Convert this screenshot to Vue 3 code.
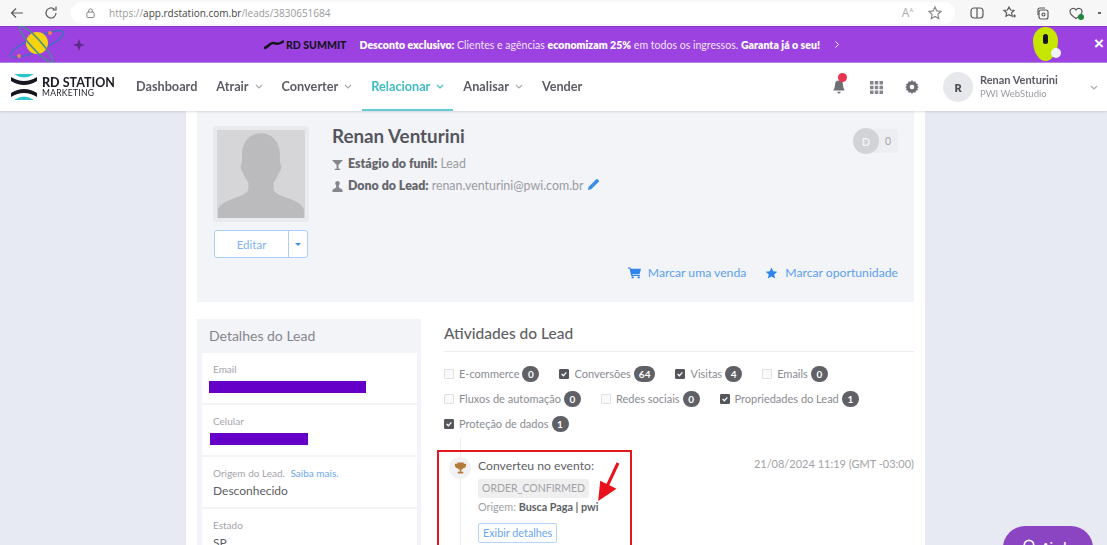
<script setup>
const navItems = [
  { label: 'Dashboard' },
  { label: 'Atrair', caret: true },
  { label: 'Converter', caret: true },
  { label: 'Relacionar', caret: true, active: true },
  { label: 'Analisar', caret: true },
  { label: 'Vender' }
]
const filterRows = [
  [
    { label: 'E-commerce', count: 0, on: false },
    { label: 'Conversões', count: 64, on: true },
    { label: 'Visitas', count: 4, on: true },
    { label: 'Emails', count: 0, on: false }
  ],
  [
    { label: 'Fluxos de automação', count: 0, on: false },
    { label: 'Redes sociais', count: 0, on: false },
    { label: 'Propriedades do Lead', count: 1, on: true }
  ],
  [{ label: 'Proteção de dados', count: 1, on: true }]
]
</script>

<template>
  <div class="screen">
    <header class="browser">
      <svg class="bicon back" viewBox="0 0 16 16"><path d="M14 8H3M7 3.500 2.500 8 7 12.500" /></svg>
      <svg class="bicon reload" viewBox="0 0 16 16"><path d="M13 8a5 5 0 1 1-1.600-3.700M13 1.500v3.500H9.500" /></svg>
      <div class="url">
        <svg class="lock" viewBox="0 0 12 12"><rect x="2" y="5" width="8" height="6" rx="1.500" /><path d="M4 5V3.500a2 2 0 0 1 4 0V5" /></svg>
        <span class="url-text">https://<b>app.rdstation.com.br</b>/leads/3830651684</span>
        <span class="aa">A<small>ᴬ</small></span>
        <svg class="bicon star" viewBox="0 0 16 16"><path d="m8 2 1.800 3.900 4.200.5-3.100 2.900.8 4.200L8 11.400l-3.700 2.100.8-4.200L2 6.400l4.200-.5z" /></svg>
      </div>
      <div class="tools">
        <svg class="bicon" viewBox="0 0 16 16"><rect x="2" y="3" width="12" height="10" rx="3" /><path d="M8 3v10" /></svg>
        <svg class="bicon" viewBox="0 0 16 16"><path d="m7 2 1.600 3 3.400.5-2.400 2.300.6 3.400L7 9.600l-3 1.600.6-3.400L2 5.500 5.400 5z" /><path d="M11 11h3M12.500 9.500v3" /></svg>
        <svg class="bicon" viewBox="0 0 16 16"><rect x="4" y="5" width="9" height="9" rx="2" /><path d="M3 10V4.500A2 2 0 0 1 5 3h5" /><circle cx="8.500" cy="9.500" r="1.500" /></svg>
        <span class="ext">
          <svg class="bicon" viewBox="0 0 16 16"><path d="M8 13.500C4 11 2 9 2 6.500 2 3 6.500 2.500 8 5c1.500-2.500 6-2 6 1.500 0 2.500-2 4.500-6 7z" /></svg>
          <i class="ext-dot"></i>
        </span>
        <span class="more"></span>
      </div>
    </header>

    <div class="banner">
      <svg class="planet" viewBox="0 0 60 36">
        <ellipse cx="31" cy="18" rx="29" ry="7" transform="rotate(-24 31 18)" fill="none" stroke="#3f6fc0" stroke-width="1.500" />
        <circle cx="31" cy="17" r="11" fill="#f5d40f" />
        <ellipse cx="30" cy="18" rx="24" ry="5" transform="rotate(48 30 18)" fill="none" stroke="#4a8a90" stroke-width="1.500" />
        <circle cx="13" cy="30" r="2" fill="#ee7f55" />
        <circle cx="44" cy="7" r="2" fill="#ee7f55" />
      </svg>
      <svg class="spark" viewBox="0 0 12 12"><path d="M6 0 7.500 4.500 12 6 7.500 7.500 6 12 4.500 7.500 0 6 4.500 4.500z" /></svg>
      <div class="promo">
        <svg class="wave" viewBox="0 0 20 10"><path d="M0 8c4 0 5-5 9-5s4 3 11-2" fill="none" stroke="#15151f" stroke-width="2.500" /></svg>
        <strong class="summit">RD SUMMIT</strong>
        <span class="promo-text"><b>Desconto exclusivo:</b> Clientes e agências <b>economizam 25%</b> em todos os ingressos. <b>Garanta já o seu!</b></span>
        <svg class="promo-arrow" viewBox="0 0 8 10"><path d="m2 1 4 4-4 4" /></svg>
      </div>
      <div class="mascot">
        <i class="keyhole"></i>
        <i class="bubble"></i>
      </div>
      <span class="banner-close">×</span>
    </div>

    <nav class="nav">
      <div class="logo">
        <svg viewBox="0 0 26 26" class="logo-mark">
          <path d="M0 3q13 8 26 0v4Q13 15 0 7z" fill="#15151f" />
          <path d="M0 23q13-8 26 0v-4Q13 11 0 19z" fill="#15151f" />
          <path d="M3 0h20q-10 7-20 0zM3 26h20q-10-7-20 0z" fill="#2cc4cc" />
        </svg>
        <div class="logo-text">
          <span class="logo-top"><b>RD</b> STATION</span>
          <span class="logo-sub">MARKETING</span>
        </div>
      </div>
      <ul class="menu">
        <li v-for="item in navItems" :key="item.label" :class="{ active: item.active }">
          {{ item.label }}
          <svg v-if="item.caret" class="caret" viewBox="0 0 8 5"><path d="m1 1 3 3 3-3" /></svg>
        </li>
      </ul>
      <div class="nav-right">
        <span class="bell">
          <svg viewBox="0 0 16 18"><path d="M8 2a4.500 4.500 0 0 0-4.500 4.500c0 4-1.500 6-2 7h13c-.500-1-2-3-2-7A4.500 4.500 0 0 0 8 2zM6 15a2 2 0 0 0 4 0z" /></svg>
          <i class="bell-dot"></i>
        </span>
        <svg class="grid-icon" viewBox="0 0 13 13"><path d="M0 0h3.500v3.500H0zM4.750 0h3.500v3.500h-3.500zM9.500 0H13v3.500H9.500zM0 4.750h3.500v3.500H0zM4.750 4.750h3.500v3.500h-3.500zM9.500 4.750H13v3.500H9.500zM0 9.500h3.500V13H0zM4.750 9.500h3.500V13h-3.500zM9.500 9.500H13V13H9.500z" /></svg>
        <svg class="gear" viewBox="0 0 14 14"><path fill-rule="evenodd" d="M7 0l1.300 1.700 2.100-.5.500 2.100 2.100.6L12.300 6 14 7l-1.700 1 .7 2.100-2.100.6-.5 2.100-2.100-.5L7 14l-1.300-1.700-2.100.5-.5-2.100L1 10.100 1.700 8 0 7l1.700-1L1 3.900l2.100-.6.500-2.100 2.100.5zM7 4.700a2.300 2.300 0 1 0 0 4.600 2.300 2.300 0 0 0 0-4.600z" /></svg>
        <span class="avatar">R</span>
        <div class="user">
          <span class="user-name">Renan Venturini</span>
          <span class="user-org">PWI WebStudio</span>
        </div>
        <svg class="caret user-caret" viewBox="0 0 8 5"><path d="m1 1 3 3 3-3" /></svg>
      </div>
    </nav>

    <main class="page">
      <div class="sheet">
        <section class="profile">
          <div class="photo-col">
            <div class="photo">
              <svg viewBox="0 0 84 84" preserveAspectRatio="none">
                <rect width="84" height="84" fill="#d6d6d8" />
                <path d="M42 3c-11 0-18 9-18 20 0 4 0 9-1 10-1 2 0 6 2 8 1 3 3 7 5 9v6c0 3-4 5-8 7C14 66 3 69 1 76v8h82v-8c-2-7-13-10-21-13-4-2-8-4-8-7v-6c2-2 4-6 5-9 2-2 3-6 2-8-1-1-1-6-1-10C60 12 53 3 42 3z" fill="#bbbbbd" />
              </svg>
            </div>
            <div class="edit-btn">
              <span class="edit-main">Editar</span>
              <span class="edit-drop"><i></i></span>
            </div>
          </div>
          <div class="identity">
            <h1>Renan Venturini</h1>
            <p class="meta">
              <svg viewBox="0 0 12 12" class="meta-icon"><path d="M0 1h12L7 6.500V10.500h2V12H3v-1.500h2V6.500z" /></svg>
              <b>Estágio do funil:</b> Lead
            </p>
            <p class="meta">
              <svg viewBox="0 0 12 12" class="meta-icon"><path d="M6 0a2.500 2.500 0 0 1 1.500 4.500V7l4 2.500V12H.500V9.500l4-2.500V4.500A2.500 2.500 0 0 1 6 0z" /></svg>
              <b>Dono do Lead:</b> renan.venturini@pwi.com.br
              <svg viewBox="0 0 14 14" class="pencil"><path d="M1 13l.8-3.500L10 1.300a1 1 0 0 1 1.400 0l1.300 1.300a1 1 0 0 1 0 1.400L4.500 12.200z" /></svg>
            </p>
          </div>
          <div class="profile-side">
            <div class="score"><span class="score-dot">D</span><span class="score-num">0</span></div>
            <div class="profile-links">
              <span class="plink">
                <svg viewBox="0 0 14 12"><path d="M0 0h2.500l.5 1.500h11l-1.500 5.500H4.500l.3 1h8v1.200H3.500L1.600 1.200H0z" /><circle cx="5" cy="10.800" r="1.200" /><circle cx="11.500" cy="10.800" r="1.200" /></svg>
                Marcar uma venda
              </span>
              <span class="plink">
                <svg viewBox="0 0 14 14"><path d="m7 .5 2 4.500 4.800.5-3.600 3.200 1 4.800L7 11l-4.200 2.500 1-4.800L.2 5.500 5 5z" /></svg>
                Marcar oportunidade
              </span>
            </div>
          </div>
        </section>

        <div class="columns">
          <aside class="details">
            <h2>Detalhes do Lead</h2>
            <div class="field">
              <span class="field-label">Email</span>
              <span class="redact redact-email"></span>
            </div>
            <div class="field">
              <span class="field-label">Celular</span>
              <span class="redact redact-phone"></span>
            </div>
            <div class="field">
              <span class="field-label">Origem do Lead. <a>Saiba mais.</a></span>
              <span class="field-value">Desconhecido</span>
            </div>
            <div class="field">
              <span class="field-label">Estado</span>
              <span class="field-value">SP</span>
            </div>
          </aside>

          <section class="activity">
            <h2>Atividades do Lead</h2>
            <div class="filters">
              <div v-for="(row, i) in filterRows" :key="i" class="filter-row">
                <label v-for="f in row" :key="f.label" class="filter">
                  <span class="box" :class="{ on: f.on }">
                    <svg v-if="f.on" viewBox="0 0 10 10"><path d="m2 5 2.200 2.200L8 3" /></svg>
                  </span>
                  <span class="filter-label">{{ f.label }}</span>
                  <span class="count">{{ f.count }}</span>
                </label>
              </div>
            </div>
            <div class="timeline">
              <div class="event">
                <div class="event-body">
                  <span class="trophy">
                    <svg viewBox="0 0 14 14"><path d="M3.500 1h7v1.500H13V4c0 2-1.500 3-3 3.300A3.500 3.500 0 0 1 7.800 9v2H10v2H4v-2h2.200V9A3.500 3.500 0 0 1 4 7.300C2.500 7 1 6 1 4V2.500h2.500z" /></svg>
                  </span>
                  <div class="event-text">
                    <p class="event-title">Converteu no evento:</p>
                    <span class="tag">ORDER_CONFIRMED</span>
                    <p class="origin">Origem: <b>Busca Paga | pwi</b></p>
                    <span class="details-btn">Exibir detalhes</span>
                  </div>
                </div>
                <svg class="arrow" viewBox="0 0 24 40"><path d="M21 2 9.500 26.500M3 37l1.500-15 12 6z" stroke="#e8111c" stroke-width="3" fill="#e8111c" /></svg>
              </div>
              <span class="event-date">21/08/2024 11:19 (GMT -03:00)</span>
            </div>
          </section>
        </div>
      </div>
      <div class="help">
        <svg viewBox="0 0 14 14"><circle cx="7" cy="7" r="5.500" /></svg>
        Ajuda
      </div>
    </main>
  </div>
</template>

<style>
html, body { margin: 0; background: #fff; overflow: hidden; }
</style>

<style scoped>
* { box-sizing: border-box; }
.screen {
  width: 1107px;
  height: 545px;
  overflow: hidden;
  font-family: Lato, "Noto Sans", sans-serif;
  color: #55565c;
  filter: blur(0.6px);
  display: flex;
  flex-direction: column;
}
h1, h2, p, ul { margin: 0; padding: 0; }

.browser {
  height: 26px;
  flex: none;
  background: #f7f7f7;
  display: flex;
  align-items: center;
  padding-left: 9px;
}
.bicon { width: 16px; height: 16px; fill: none; stroke: #5b5b5b; stroke-width: 1.200; flex: none; }
.back { margin-right: 18px; }
.reload { margin-right: 12px; }
.url {
  width: 884px;
  height: 22px;
  margin-top: -1px;
  background: #fff;
  border-radius: 11px;
  display: flex;
  align-items: center;
  padding: 0 7px 0 14px;
  font-family: "Open Sans", sans-serif;
  font-size: 10px;
  color: #9a9a9a;
}
.lock { width: 11px; height: 12px; fill: none; stroke: #777; margin-right: 13px; }
.url-text { flex: 1; }
.url-text b { font-weight: 400; color: #444; }
.aa { color: #aaa; font-size: 12px; margin-right: 14px; }
.aa small { font-size: 8px; vertical-align: 3px; }
.star { margin-right: 5px; stroke: #888; }
.tools { display: flex; gap: 17px; margin-left: 14px; align-items: center; }
.ext { position: relative; display: flex; }
.ext-dot { position: absolute; right: 0; bottom: 1px; width: 6px; height: 6px; background: #1f8a3a; border-radius: 50%; }
.more { width: 3px; height: 2px; background: #666; margin-left: -3px; }

.banner {
  height: 37px;
  flex: none;
  background: #9c42e0;
  border-top: 1px solid #8a34cc;
  border-bottom: 1px solid #b884e6;
  display: flex;
  align-items: center;
  position: relative;
  padding-left: 8px;
}
.planet { width: 60px; height: 36px; position: absolute; left: 6px; top: -1px; }
.spark { width: 12px; height: 12px; fill: #5c2a88; position: absolute; left: 73px; top: 12px; }
.promo {
  margin-left: 256px;
  display: flex;
  align-items: center;
  color: #f0e4fb;
  font-size: 10.550px;
}
.wave { width: 20px; height: 10px; margin-right: 2px; }
.summit { color: #15151f; font-size: 10.500px; font-weight: 900; margin-right: 13px; white-space: nowrap; }
.promo-text { white-space: nowrap; }
.promo-text b { color: #fff; font-weight: 800; }
.promo-arrow { width: 6px; height: 9px; fill: none; stroke: #fff; stroke-width: 1.300; margin-left: 14px; }
.mascot {
  position: absolute;
  left: 1033px;
  top: 0;
  width: 25px;
  height: 34px;
  background: #c6e600;
  border-radius: 50% 50% 50% 50% / 40% 40% 60% 60%;
}
.keyhole { position: absolute; left: 10px; top: 7px; width: 5px; height: 10px; background: #15151f; border-radius: 3px; }
.bubble { position: absolute; left: 18px; top: 21px; width: 10px; height: 10px; background: #eef2fb; border-radius: 50%; }
.banner-close {
  position: absolute;
  right: 3px;
  top: 7px;
  color: #fff;
  font: 700 17px/20px "Liberation Sans", sans-serif;
}

.nav {
  height: 48px;
  flex: none;
  background: #fff;
  display: flex;
  align-items: center;
  padding-left: 11px;
  box-shadow: 0 1px 2px rgba(60, 60, 80, 0.16);
  position: relative;
  z-index: 1;
}
.logo { display: flex; align-items: center; width: 116px; }
.logo-mark { width: 26px; height: 26px; margin-right: 5px; flex: none; }
.logo-text { display: flex; flex-direction: column; color: #1c1c24; }
.logo-top { font-size: 12.500px; line-height: 12px; font-weight: 700; white-space: nowrap; }
.logo-top b { font-weight: 900; }
.logo-sub { font-size: 8.500px; line-height: 9px; letter-spacing: 0.3px; }
.menu { list-style: none; display: flex; height: 100%; gap: 1px; }
.menu li {
  padding: 0 9px;
  display: flex;
  align-items: center;
  gap: 6px;
  font-size: 12.700px;
  font-weight: 700;
  color: #5b5c63;
  border-bottom: 2px solid transparent;
  white-space: nowrap;
}
.menu li.active { color: #3fbcc4; border-bottom-color: #63cdd3; }
.caret { width: 8px; height: 5px; fill: none; stroke: #a6a8ae; stroke-width: 1.100; }
.active .caret { stroke: #3fbcc4; }
.nav-right { margin-left: auto; display: flex; align-items: center; }
.bell { position: relative; width: 15px; height: 18px; margin-right: 23px; }
.bell svg { width: 14px; height: 17px; fill: #6d6f75; display: block; }
.bell-dot { position: absolute; left: 6px; top: -5px; width: 9px; height: 9px; background: #e8344e; border-radius: 50%; }
.grid-icon { width: 13px; height: 13px; fill: #85878d; margin-right: 22px; }
.gear { width: 14px; height: 14px; fill: #6d6f75; margin-right: 24px; }
.avatar {
  width: 30px;
  height: 30px;
  border-radius: 50%;
  background: #e7e8ec;
  color: #4d4e55;
  font-size: 11px;
  font-weight: 800;
  display: flex;
  align-items: center;
  justify-content: center;
  margin-right: 7px;
}
.user { display: flex; flex-direction: column; width: 110px; }
.user-name { font-size: 11px; line-height: 14px; font-weight: 700; color: #5b5c63; white-space: nowrap; }
.user-org { font-size: 9.500px; line-height: 14px; color: #9a9ba1; white-space: nowrap; }
.user-caret { margin-right: 9px; }

.page {
  flex: 1;
  min-height: 0;
  background: #e7eaf2;
  position: relative;
  overflow: hidden;
}
.sheet {
  width: 739px;
  height: 100%;
  margin-left: 186px;
  background: #fff;
  padding: 0 11px;
}
.profile {
  height: 191px;
  background: #f3f4f8;
  display: flex;
  padding: 15px 16px 0;
}
.photo-col { width: 96px; flex: none; }
.photo {
  width: 96px;
  height: 96px;
  background: #e9eaee;
  padding: 4px;
  border-radius: 2px;
}
.photo svg { width: 88px; height: 88px; display: block; }
.edit-btn {
  margin-top: 8px;
  margin-left: 1px;
  width: 94px;
  height: 28px;
  background: #fff;
  border: 1px solid #a9cffa;
  border-radius: 3px;
  display: flex;
  color: #7eb2ef;
  font-size: 11.500px;
}
.edit-main { flex: 1; display: flex; align-items: center; justify-content: center; }
.edit-drop {
  width: 19px;
  border-left: 1px solid #a9cffa;
  display: flex;
  align-items: center;
  justify-content: center;
}
.edit-drop i { border: 3px solid transparent; border-top: 3px solid #4a90e2; border-bottom: 0; }
.identity { margin-left: 23px; width: 290px; flex: none; margin-top: -1px; }
.identity h1 {
  font-size: 18.800px;
  line-height: 22px;
  font-weight: 700;
  color: #55565c;
  margin-bottom: 6px;
}
.meta {
  display: flex;
  align-items: center;
  gap: 3px;
  font-size: 12.400px;
  line-height: 22px;
  color: #9a9ba1;
  white-space: nowrap;
}
.meta b { color: #66676d; font-weight: 800; }
.meta-icon { width: 11px; height: 11px; fill: #85868b; margin-right: 2px; }
.pencil { width: 13px; height: 13px; fill: #3d8de8; margin-top: -3px; }
.profile-side {
  flex: 1;
  display: flex;
  flex-direction: column;
  align-items: flex-end;
}
.score {
  display: flex;
  align-items: center;
  width: 45px;
  height: 24px;
  margin-top: 3px;
  background: #eceef2;
  border-radius: 12px 3px 3px 12px;
}
.score-dot {
  width: 26px;
  height: 26px;
  border-radius: 50%;
  background: #d2d3d6;
  color: #f2f2f4;
  font-size: 11px;
  font-weight: 700;
  display: flex;
  align-items: center;
  justify-content: center;
}
.score-num { margin-left: 6px; color: #a5a6ab; font-size: 10.500px; }
.profile-links {
  display: flex;
  gap: 19px;
  margin-top: 112px;
  white-space: nowrap;
}
.plink {
  display: flex;
  align-items: center;
  gap: 7px;
  color: #5ba0ee;
  font-size: 12.200px;
}
.plink svg { width: 13px; height: 12px; fill: #2f86ea; }

.columns { display: flex; margin-top: 17px; }
.details {
  width: 224px;
  flex: none;
  background: #f3f4f8;
  padding: 0 4px 0 5px;
}
.details h2 {
  height: 34px;
  padding: 7px 7px 0;
  font-size: 14px;
  line-height: 20px;
  font-weight: 400;
  color: #85868c;
}
.field {
  height: 50px;
  background: #fff;
  margin-bottom: 2px;
  padding: 10px 11px 0;
  display: flex;
  flex-direction: column;
  position: relative;
}
.field-label { font-size: 10px; line-height: 13px; color: #a3a4a9; }
.field-label a { color: #6ba7ee; margin-left: 3px; }
.field-value { font-size: 12px; line-height: 20px; margin-top: 1px; color: #5c5d63; }
.redact { display: block; background: #6500c8; position: absolute; left: 7px; }
.redact-email { top: 28px; width: 157px; height: 12px; }
.redact-phone { top: 28px; left: 8px; width: 98px; height: 12px; }

.activity { flex: 1; margin-left: 23px; min-width: 0; }
.activity h2 {
  height: 33px;
  padding-top: 4px;
  border-bottom: 1px solid #ececef;
  font-size: 15.500px;
  line-height: 20px;
  font-weight: 500;
  color: #5e5f65;
}
.filters { margin-top: 9px; }
.filter-row { display: flex; height: 25px; align-items: center; gap: 20px; }
.filter { display: flex; align-items: center; font-size: 11px; color: #8a8b91; white-space: nowrap; }
.box {
  width: 10px;
  height: 10px;
  border: 1px solid #dfe0e3;
  border-radius: 1px;
  background: #fafafa;
  margin-right: 5px;
  display: flex;
}
.box.on { background: #55565c; border-color: #55565c; }
.box svg { width: 100%; height: 100%; fill: none; stroke: #fff; stroke-width: 1.500; }
.count {
  min-width: 17px;
  height: 16px;
  border-radius: 8px;
  padding: 0 5px;
  margin-left: 3px;
  background: #606166;
  color: #fff;
  font-size: 10px;
  font-weight: 700;
  display: flex;
  align-items: center;
  justify-content: center;
}
.timeline {
  margin-top: 14px;
  display: flex;
  justify-content: space-between;
  margin-left: -7px;
  position: relative;
}
.timeline::before {
  content: "";
  position: absolute;
  left: 23px;
  top: -12px;
  width: 1px;
  height: 120px;
  background: #ececef;
}
.event {
  width: 195px;
  height: 110px;
  border: 2px solid #e2171f;
  position: relative;
  padding: 5px 0 0 10px;
}
.event-body { display: flex; }
.trophy {
  width: 22px;
  height: 22px;
  border-radius: 50%;
  background: #f2f2f4;
  display: flex;
  align-items: center;
  justify-content: center;
  margin-right: 7px;
  flex: none;
}
.trophy svg { width: 13px; height: 14px; fill: #b5793a; }
.event-text { display: flex; flex-direction: column; align-items: flex-start; padding-top: 1px; }
.event-title { font-size: 12.200px; line-height: 15px; color: #5e5f65; white-space: nowrap; }
.tag {
  background: #efeff0;
  color: #a1a2a6;
  font-size: 10.500px;
  line-height: 19px;
  height: 19px;
  padding: 0 4px;
  margin-top: 6px;
  border-radius: 2px;
}
.origin { font-size: 10.800px; line-height: 14px; margin-top: 2px; color: #a1a2a6; white-space: nowrap; }
.origin b { font-weight: 700; color: #5e5f65; }
.details-btn {
  margin-top: 9px;
  height: 20px;
  padding: 0 4px;
  border: 1px solid #b5d4fa;
  border-radius: 2px;
  color: #6ba7ee;
  font-size: 10.800px;
  line-height: 18px;
}
.arrow { position: absolute; left: 158px; top: 9px; width: 24px; height: 40px; }
.event-date { font-size: 11px; line-height: 14px; color: #a1a2a6; margin-top: 7px; white-space: nowrap; }
.help {
  position: absolute;
  left: 1003px;
  top: 415px;
  width: 90px;
  height: 44px;
  border-radius: 22px;
  background: #8c45c2;
  color: #fff;
  display: flex;
  align-items: flex-start;
  justify-content: center;
  gap: 6px;
  padding-top: 13px;
  font-size: 12px;
  font-weight: 700;
}
.help svg { width: 12px; height: 12px; fill: none; stroke: #fff; stroke-width: 2; }
</style>
